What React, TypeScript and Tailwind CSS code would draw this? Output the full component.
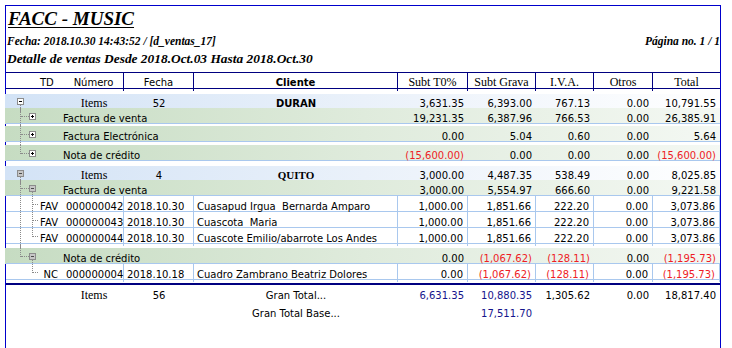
import React from 'react';

const COLS = 'grid grid-cols-[58px_60px_70px_204px_70px_68px_58px_59px_1fr]';
const SERIF = "font-['Liberation_Serif',serif]";

function Box({ plus, gray, className }: { plus?: boolean; gray?: boolean; className: string }) {
    return (
        <span
            className={`absolute w-[7px] h-[7px] border border-[#8c8c8c] ${gray ? 'bg-[#c6c6c6]' : 'bg-white'} ${className}`}
        >
            <span className={`absolute left-[1px] top-[2px] w-[3px] h-px ${gray ? 'bg-[#4a4a4a]' : 'bg-black'}`} />
            {plus && <span className="absolute left-[2px] top-[1px] w-px h-[3px] bg-black" />}
        </span>
    );
}

function Num({ v, line, blue, low }: { v: string; line?: boolean; blue?: boolean; low?: boolean }) {
    const neg = v.startsWith('(');
    return (
        <div
            className={`flex items-center justify-end pr-[4px] whitespace-nowrap leading-[15px] ${low ? 'pt-[3px]' : ''} ${line ? 'border-r border-[#a9c8ee]' : ''} ${neg ? 'text-[#ee1c25]' : blue ? 'text-[#14148c]' : ''}`}
        >
            {v}
        </div>
    );
}

function Gap({ h, trunk }: { h: string; trunk?: boolean }) {
    return (
        <div className={`relative ${h}`}>
            {trunk && <span className="absolute left-[14px] top-0 bottom-0 border-l border-dotted border-[#8a8a8a]" />}
        </div>
    );
}

function GroupRow({ count, name, vals, gray, serifName }: { count: string; name: string; vals: string[]; gray?: boolean; serifName?: boolean }) {
    return (
        <div className={`${COLS} h-[14px] bg-linear-to-r from-[#d3e3f6] via-[#eaf1fa] to-white shadow-[-1px_0_0_#d3e3f6]`}>
            <div className="relative">
                <Box gray={gray} className="left-[11px] top-[4px]" />
                <span className="absolute left-[14px] top-[11px] bottom-0 border-l border-dotted border-[#8a8a8a]" />
            </div>
            <div className={`flex items-center justify-center text-[12px] ${SERIF}`}>Items</div>
            <div className="flex items-center justify-center">{count}</div>
            <div className={`flex items-center justify-center font-bold ${serifName ? `text-[11px] ${SERIF}` : ''}`}>{name}</div>
            {vals.map((v, i) => (
                <Num key={i} v={v} />
            ))}
        </div>
    );
}

function SubRow({ label, vals, plus, gray, last, down }: { label: string; vals: string[]; plus?: boolean; gray?: boolean; last?: boolean; down?: boolean }) {
    return (
        <div className={`${COLS} h-[16px] border-b border-[#a9c8ee] bg-linear-to-r from-[#c6dcc2] via-[#dfebdc] to-[#f4f8f3] shadow-[-1px_0_0_#c6dcc2]`}>
            <div className="relative">
                {last ? (
                    <span className="absolute left-[14px] top-0 h-[9px] border-l border-dotted border-[#8a8a8a]" />
                ) : (
                    <span className="absolute left-[14px] top-0 bottom-[-1px] border-l border-dotted border-[#8a8a8a]" />
                )}
                <span className="absolute left-[15px] top-[8px] w-[8px] border-t border-dotted border-[#8a8a8a]" />
                <Box plus={plus} gray={gray} className="left-[23px] top-[5px]" />
                {down && <span className="absolute left-[26px] top-[12px] bottom-[-1px] border-l border-dotted border-[#8a8a8a]" />}
            </div>
            <div className="col-span-3 flex items-center -ml-px pt-[3px] leading-[15px]">{label}</div>
            {vals.map((v, i) => (
                <Num key={i} v={v} low />
            ))}
        </div>
    );
}

function DetailRow({ td, num, date, client, vals, trunk, last }: { td: string; num: string; date: string; client: string; vals: string[]; trunk?: boolean; last?: boolean }) {
    return (
        <div className={`${COLS} h-[16px] border-b border-[#a9c8ee] leading-[15px]`}>
            <div className="relative flex items-center justify-end pr-[6px] pt-[3px]">
                {trunk && <span className="absolute left-[14px] top-0 bottom-[-1px] border-l border-dotted border-[#8a8a8a]" />}
                {last ? (
                    <span className="absolute left-[26px] top-0 h-[9px] border-l border-dotted border-[#8a8a8a]" />
                ) : (
                    <span className="absolute left-[26px] top-0 bottom-[-1px] border-l border-dotted border-[#8a8a8a]" />
                )}
                <span className="absolute left-[27px] top-[8px] w-[5px] border-t border-dotted border-[#8a8a8a]" />
                {td}
            </div>
            <div className="flex items-center pl-[2px] pt-[3px] border-r border-[#a9c8ee]">{num}</div>
            <div className="flex items-center pl-[3px] pt-[3px] border-r border-[#a9c8ee]">{date}</div>
            <div className="flex items-center pl-[3px] pt-[3px] border-r border-[#a9c8ee] whitespace-pre">{client}</div>
            {vals.map((v, i) => (
                <Num key={i} v={v} line low />
            ))}
        </div>
    );
}

export default function App() {
    const favVals = ['1,000.00', '1,851.66', '222.20', '0.00', '3,073.86'];

    return (
        <div className="h-[348px] w-[732px] overflow-hidden bg-white text-black text-[10px] font-['DejaVu_Sans',sans-serif]">
            <div className="ml-[5px] mt-[5px] w-[716px] h-[360px] border border-[#0000cc]">
                {/* Title block */}
                <div className={`h-[26px] pl-[2px] leading-[26px] text-[19px] font-bold italic underline decoration-1 underline-offset-[2px] ${SERIF}`}>
                    FACC - MUSIC
                </div>
                <div className={`flex justify-between h-[18px] leading-[18px] pl-px text-[11.5px] font-bold italic ${SERIF}`}>
                    <span>Fecha: 2018.10.30 14:43:52 / [d_ventas_17]</span>
                    <span>Página no. 1 / 1</span>
                </div>
                <div className={`h-[17px] leading-[17px] pl-px text-[13.4px] font-bold italic ${SERIF}`}>
                    Detalle de ventas Desde 2018.Oct.03 Hasta 2018.Oct.30
                </div>
                <div className="h-[5px]" />

                {/* Column header */}
                <div className={`${COLS} h-[17px] border-y border-[#000080]`}>
                    <div className="flex items-center pl-[34px]">TD</div>
                    <div className="flex items-center justify-center border-r border-[#000080]">Número</div>
                    <div className="flex items-center justify-center border-r border-[#000080]">Fecha</div>
                    <div className="flex items-center justify-center border-r border-[#000080] font-bold">Cliente</div>
                    <div className={`flex items-center justify-center border-r border-[#000080] text-[12px] ${SERIF}`}>Subt T0%</div>
                    <div className={`flex items-center justify-center border-r border-[#000080] text-[12px] ${SERIF}`}>Subt Grava</div>
                    <div className={`flex items-center justify-center border-r border-[#000080] text-[12px] ${SERIF}`}>I.V.A.</div>
                    <div className={`flex items-center justify-center border-r border-[#000080] text-[12px] ${SERIF}`}>Otros</div>
                    <div className={`flex items-center justify-center text-[12px] ${SERIF}`}>Total</div>
                </div>

                <Gap h="h-[5px]" />

                {/* DURAN */}
                <GroupRow count="52" name="DURAN" vals={['3,631.35', '6,393.00', '767.13', '0.00', '10,791.55']} />
                <SubRow label="Factura de venta" plus vals={['19,231.35', '6,387.96', '766.53', '0.00', '26,385.91']} />
                <Gap h="h-[2px]" trunk />
                <SubRow label="Factura Electrónica" plus vals={['0.00', '5.04', '0.60', '0.00', '5.64']} />
                <Gap h="h-[3px]" trunk />
                <SubRow label="Nota de crédito" plus last vals={['(15,600.00)', '0.00', '0.00', '0.00', '(15,600.00)']} />

                <Gap h="h-[5px]" />

                {/* QUITO */}
                <GroupRow count="4" name="QUITO" gray serifName vals={['3,000.00', '4,487.35', '538.49', '0.00', '8,025.85']} />
                <SubRow label="Factura de venta" gray down vals={['3,000.00', '5,554.97', '666.60', '0.00', '9,221.58']} />
                <DetailRow td="FAV" num="000000042" date="2018.10.30" client="Cuasapud Irgua  Bernarda Amparo" vals={favVals} trunk />
                <DetailRow td="FAV" num="000000043" date="2018.10.30" client="Cuascota  Maria" vals={favVals} trunk />
                <DetailRow td="FAV" num="000000044" date="2018.10.30" client="Cuascote Emilio/abarrote Los Andes" vals={favVals} trunk last />
                <Gap h="h-[4px]" trunk />
                <SubRow label="Nota de crédito" gray last down vals={['0.00', '(1,067.62)', '(128.11)', '0.00', '(1,195.73)']} />
                <DetailRow
                    td="NC"
                    num="000000004"
                    date="2018.10.18"
                    client="Cuadro Zambrano Beatriz Dolores"
                    vals={['0.00', '(1,067.62)', '(128.11)', '0.00', '(1,195.73)']}
                    last
                />

                {/* Totals */}
                <div className="h-[3px]" />
                <div className="border-t-2 border-[#000080]" />
                <div className={`${COLS} h-[20px]`}>
                    <div />
                    <div className={`flex items-center justify-center text-[12px] ${SERIF}`}>Items</div>
                    <div className="flex items-center justify-center">56</div>
                    <div className="flex items-center justify-center">Gran Total...</div>
                    <Num v="6,631.35" blue />
                    <Num v="10,880.35" blue />
                    <Num v="1,305.62" />
                    <Num v="0.00" />
                    <Num v="18,817.40" />
                </div>
                <div className={`${COLS} h-[16px]`}>
                    <div />
                    <div />
                    <div />
                    <div className="flex items-center justify-center">Gran Total Base...</div>
                    <div />
                    <Num v="17,511.70" blue />
                </div>
            </div>
        </div>
    );
}
